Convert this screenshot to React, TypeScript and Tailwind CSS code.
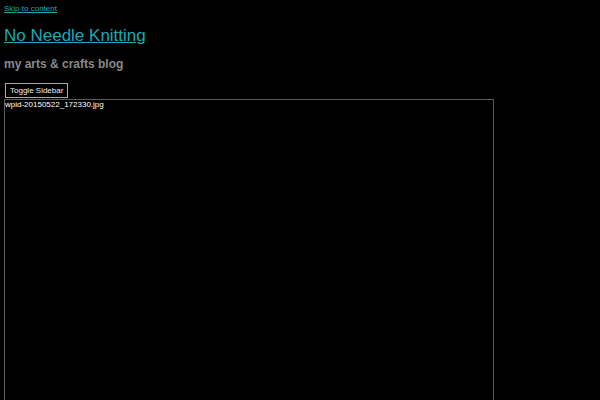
export default function App() {
  return (
    <div
      className="w-[600px] h-[400px] overflow-hidden bg-black px-[4px] pt-[3px]"
      style={{ fontFamily: '"Liberation Sans", Arial, sans-serif' }}
    >
      <a href="#content" className="block text-[8px] leading-[12px] text-[#1aa9b5] underline">
        Skip to content
      </a>
      <div className="mt-[11px] text-[17px] leading-[20px] text-[#1aa9b5] underline">
        <a href="#">No Needle Knitting</a>
      </div>
      <div className="mt-[11px] text-[12px] leading-[15px] font-bold text-[#8a8a8a]">
        my arts &amp; crafts blog
      </div>
      <button className="mt-[11px] ml-[1px] block border border-[#aaaaaa] bg-black px-[4px] h-[15px] text-[8px] leading-[12px] text-[#eeeeee]">
        Toggle Sidebar
      </button>
      <div className="mt-px w-[490px] h-[320px] border border-[#5a5a5a] text-[8px] leading-[10px] text-white">
        wpid-20150522_172330.jpg
      </div>
    </div>
  );
}
